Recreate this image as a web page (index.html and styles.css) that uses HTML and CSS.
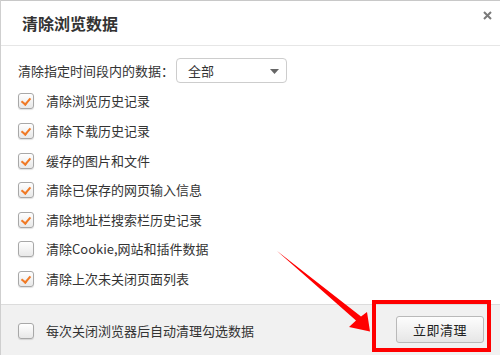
FILE: index.html
```html
<!DOCTYPE html>
<html lang="zh">
<head>
<meta charset="utf-8">
<link rel="stylesheet" href="styles.css">
</head>
<body>
<div class="dialog">
  <div class="header">
    <span class="title">清除浏览数据</span>
    <svg class="close" width="9" height="9" viewBox="0 0 9 9"><path d="M1 1L8 8M8 1L1 8" stroke="#7a7a7a" stroke-width="2"/></svg>
  </div>
  <div class="body">
    <div class="range-row">
      <span class="range-label">清除指定时间段内的数据：</span>
      <div class="select">
        <span>全部</span>
        <svg width="9" height="5" viewBox="0 0 9 5"><path d="M0 0H9L4.5 5Z" fill="#666"/></svg>
      </div>
    </div>
    <div class="options">
      <label class="opt"><span class="cb on"></span>清除浏览历史记录</label>
      <label class="opt"><span class="cb on"></span>清除下载历史记录</label>
      <label class="opt"><span class="cb on"></span>缓存的图片和文件</label>
      <label class="opt"><span class="cb on"></span>清除已保存的网页输入信息</label>
      <label class="opt"><span class="cb on"></span>清除地址栏搜索栏历史记录</label>
      <label class="opt"><span class="cb"></span>清除Cookie,网站和插件数据</label>
      <label class="opt"><span class="cb on"></span>清除上次未关闭页面列表</label>
    </div>
  </div>
  <div class="footer">
    <label class="opt"><span class="cb"></span>每次关闭浏览器后自动清理勾选数据</label>
    <button class="btn">立即清理</button>
  </div>

  <div class="highlight"></div>
  <svg class="arrow" width="500" height="355" viewBox="0 0 500 355">
    <polygon points="277,251 279,252.5 361,316.5 367,312 370,331.5 349,327 356,320.5" fill="#ff0000"/>
  </svg>
</div>
</body>
</html>
```
FILE: styles.css
```css
* { box-sizing: border-box; margin: 0; padding: 0; }
html, body { width: 500px; height: 355px; overflow: hidden; background: #fff; }
body {
  font-family: "Noto Sans CJK SC", "Noto Sans", sans-serif;
  font-size: 13px;
  color: #333;
}
.dialog {
  position: relative;
  width: 500px;
  height: 355px;
  border-left: 1px solid #cfcfcf;
  display: flex;
  flex-direction: column;
}
.header {
  height: 46px;
  border-top: 1px solid #c8c8c8;
  border-bottom: 1px solid #e6e6e6;
  display: flex;
  align-items: center;
  justify-content: space-between;
  padding: 0 8px 0 21px;
  flex: none;
}
.title {
  font-size: 16px;
  font-weight: bold;
  color: #333;
  line-height: 20px;
  margin-top: -1px;
}
.close { align-self: flex-start; margin-top: 10px; }
.body {
  height: 258px;
  flex: none;
  padding: 12px 0 0 17px;
}
.range-row {
  display: flex;
  align-items: center;
  height: 25px;
}
.range-label { width: 158px; line-height: 16px; }
.select {
  width: 111px;
  height: 25px;
  border: 1px solid #cdcdcd;
  border-radius: 4px;
  display: flex;
  align-items: center;
  justify-content: space-between;
  padding: 0 7px 0 11px;
  background: #fff;
}
.select svg { margin-top: 1px; }
.options {
  margin-top: 3.7px;
  display: flex;
  flex-direction: column;
}
.opt {
  display: flex;
  align-items: center;
  gap: 12px;
  height: 29.6px;
  line-height: 16px;
}
.cb {
  width: 16px;
  height: 16px;
  border: 1px solid #a8a8a8;
  border-radius: 3px;
  background: linear-gradient(#ffffff, #e8e8e8);
  box-shadow: 0 1px 1px rgba(0,0,0,0.12);
  flex: none;
  position: relative;
}
.cb.on::after {
  content: "";
  position: absolute;
  left: 4px;
  top: 2px;
  width: 4px;
  height: 7px;
  border-right: 2px solid #f07a26;
  border-bottom: 2px solid #f07a26;
  transform: rotate(40deg);
}
.footer {
  flex: 1;
  border-top: 1px solid #dcdcdc;
  background: #f1f1f1;
  display: flex;
  align-items: center;
  justify-content: space-between;
  padding: 0 16px 0 17px;
}
.footer .opt { height: 50px; margin-top: 1px; }
.btn {
  width: 88px;
  height: 27px;
  margin-top: -3px;
  border: 1px solid #b9b9b9;
  border-radius: 3px;
  background: linear-gradient(#fdfdfd, #e6e6e6);
  font-family: inherit;
  font-size: 13px;
  color: #222;
  letter-spacing: 0.5px;
}
.highlight {
  position: absolute;
  left: 371px;
  top: 300px;
  width: 119px;
  height: 52px;
  border: 4px solid #ff0000;
}
.arrow { position: absolute; left: -1px; top: 0; }
```
